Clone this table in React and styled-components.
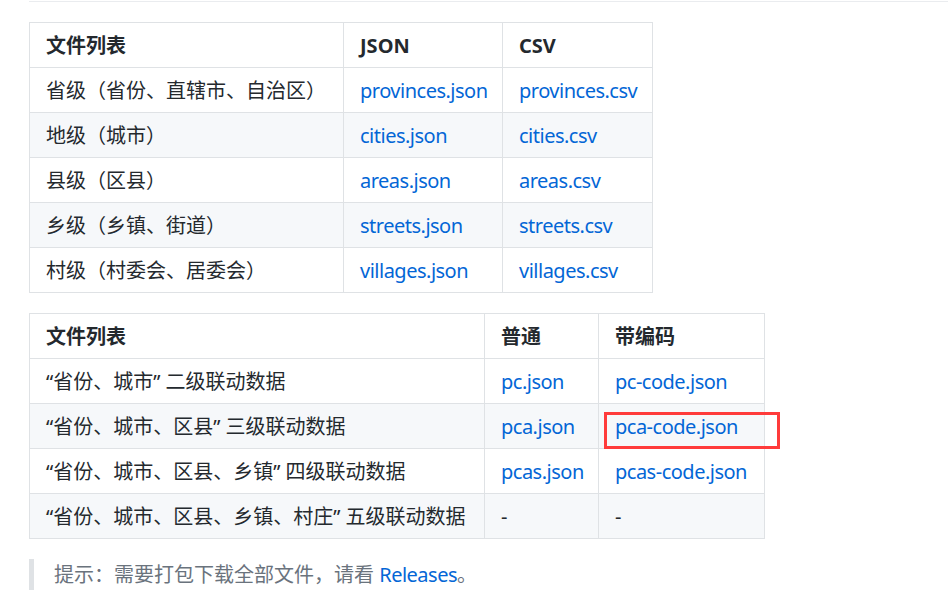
import React from 'react'
import styled, { createGlobalStyle } from 'styled-components'

const GlobalStyle = createGlobalStyle`
    body {
        margin: 0;
        background: #fff;
        font-family: "Noto Sans", "Noto Sans CJK SC", sans-serif;
        color: #24292e;
    }
`

const fileTable = {
    cols: [314, 159, 150],
    head: ['文件列表', 'JSON', 'CSV'],
    rows: [
        ['省级（省份、直辖市、自治区）', 'provinces.json', 'provinces.csv'],
        ['地级（城市）', 'cities.json', 'cities.csv'],
        ['县级（区县）', 'areas.json', 'areas.csv'],
        ['乡级（乡镇、街道）', 'streets.json', 'streets.csv'],
        ['村级（村委会、居委会）', 'villages.json', 'villages.csv'],
    ],
}

const linkTable = {
    cols: [455, 114, 166],
    head: ['文件列表', '普通', '带编码'],
    rows: [
        ['“省份、城市” 二级联动数据', 'pc.json', 'pc-code.json'],
        ['“省份、城市、区县” 三级联动数据', 'pca.json', 'pca-code.json'],
        ['“省份、城市、区县、乡镇” 四级联动数据', 'pcas.json', 'pcas-code.json'],
        ['“省份、城市、区县、乡镇、村庄” 五级联动数据', '-', '-'],
    ],
}

function DataTable({ data }) {
    const total = data.cols.reduce((a, b) => a + b, 0)
    return (
        <Table $width={total}>
            <colgroup>
                {data.cols.map((w, i) => <col key={i} style={{ width: w }} />)}
            </colgroup>
            <thead>
                <Row>
                    {data.head.map(h => <HeadCell key={h}>{h}</HeadCell>)}
                </Row>
            </thead>
            <tbody>
                {data.rows.map((r, i) => (
                    <Row key={i} $striped={i % 2 === 1}>
                        <Cell>{r[0]}</Cell>
                        {r.slice(1).map((c, j) => (
                            <Cell key={j}>
                                {c === '-' ? c : <Link href="#">{c}</Link>}
                            </Cell>
                        ))}
                    </Row>
                ))}
            </tbody>
        </Table>
    )
}

export default function App() {
    return (
        <Page>
            <GlobalStyle />
            <Rule />
            <DataTable data={fileTable} />
            <Annotated>
                <DataTable data={linkTable} />
                <Highlight />
            </Annotated>
            <Note>
                提示：需要打包下载全部文件，请看 <Link href="#">Releases</Link>。
            </Note>
        </Page>
    )
}

const Page = styled.div`
    padding: 1px 0 0 29px;
    font-size: 20px;
    line-height: 30px;
`

const Rule = styled.div`
    height: 1px;
    background: #eaecef;
    margin-bottom: 20px;
`

const Table = styled.table`
    border-collapse: collapse;
    border-spacing: 0;
    table-layout: fixed;
    width: ${p => p.$width}px;
    margin-bottom: 20px;
`

const Row = styled.tr`
    background: ${p => (p.$striped ? '#f6f8fa' : '#fff')};
`

const HeadCell = styled.th`
    border: 1px solid #dfe2e5;
    padding: 8px 16px 6px;
    text-align: left;
    font-weight: 700;
    white-space: nowrap;
`

const Cell = styled.td`
    border: 1px solid #dfe2e5;
    padding: 8px 16px 6px;
    white-space: nowrap;
`

const Link = styled.a`
    color: #0366d6;
    text-decoration: none;
    letter-spacing: -0.5px;
`

const Annotated = styled.div`
    position: relative;
    width: fit-content;
`

const Highlight = styled.div`
    position: absolute;
    left: 575px;
    top: 99px;
    width: 176px;
    height: 37px;
    box-sizing: border-box;
    border: 3px solid #ff3b3b;
`

const Note = styled.blockquote`
    margin: 0;
    padding: 1px 20px 0;
    height: 30px;
    border-left: 5px solid #dfe2e5;
    color: #6a737d;
`
